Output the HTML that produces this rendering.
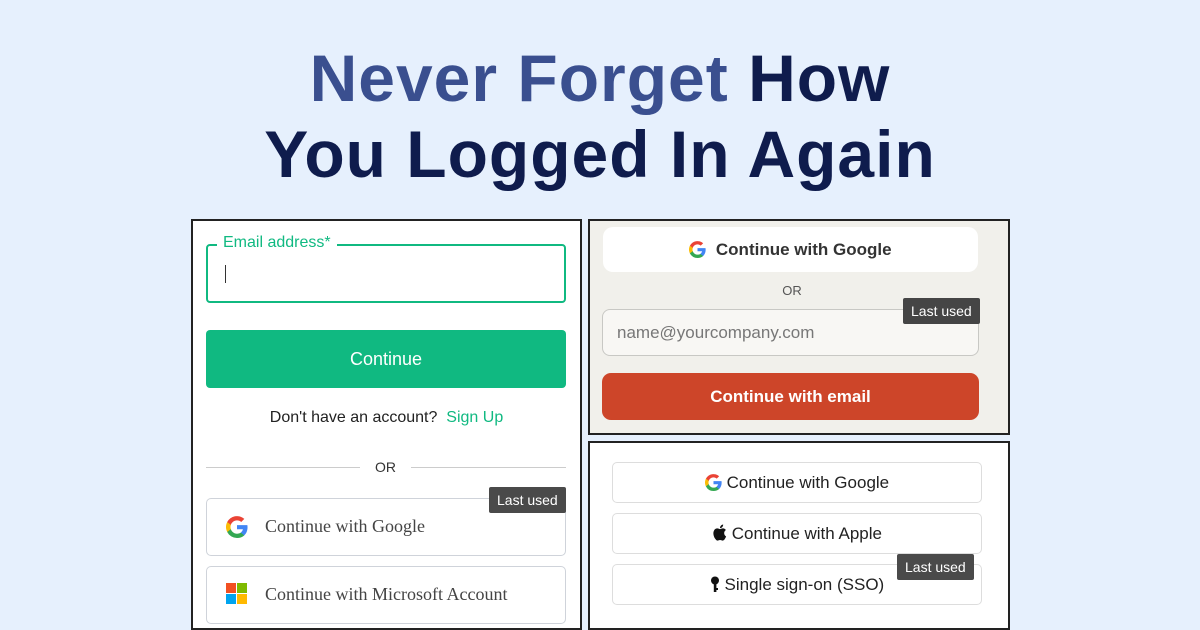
<!DOCTYPE html><html><head><style>
*{margin:0;padding:0;box-sizing:border-box}
body{width:1200px;height:630px;background:#e6f0fd;font-family:"Liberation Sans",sans-serif;position:relative;overflow:hidden}
.a{position:absolute}
h1{position:absolute;left:0;width:1200px;text-align:center;font-size:66px;font-weight:bold;color:#0f1c4d;line-height:72px;letter-spacing:1px}
.p{position:absolute;border:2px solid #222;background:#fff}
.tip{position:absolute;background:#4a4a4a;color:#fff;font-size:14px;padding:0 8px;line-height:26px;border-radius:2px}
.ob{position:absolute;border:1px solid #cfd3da;border-radius:5px;font-family:"Liberation Serif",serif;font-size:18px;color:#444}
.rb{position:absolute;left:22px;width:370px;height:41px;border:1px solid #ddd;border-radius:5px;text-align:center;line-height:39px;font-size:17px;color:#222}
svg{vertical-align:middle}
</style></head><body>
<svg width="0" height="0" style="position:absolute"><defs><g id="g"><path d="M23.5 12.3c0-.8-.1-1.6-.2-2.3H12v4.5h6.5a5.6 5.6 0 0 1-2.4 3.6v3h3.9c2.2-2.1 3.5-5.1 3.5-8.8z" fill="#4285F4"/><path d="M12 24c3.2 0 6-1.1 8-2.9l-3.9-3c-1.1.7-2.5 1.2-4.1 1.2-3.1 0-5.8-2.1-6.7-5H1.3v3.1A12 12 0 0 0 12 24z" fill="#34A853"/><path d="M5.3 14.3a7.2 7.2 0 0 1 0-4.6V6.6H1.3a12 12 0 0 0 0 10.8z" fill="#FBBC05"/><path d="M12 4.8c1.8 0 3.3.6 4.6 1.8l3.4-3.4A12 12 0 0 0 1.3 6.6l4 3.1c.9-2.8 3.6-4.9 6.7-4.9z" fill="#EA4335"/></g></defs></svg>
<h1 style="top:42px"><span style="color:#3a4f8f">Never Forget</span> How</h1>
<h1 style="top:118px">You Logged In Again</h1>

<div class="p" style="left:191px;top:219px;width:391px;height:411px">
 <div class="a" style="left:13px;top:23px;width:360px;height:59px;border:2px solid #10b981;border-radius:4px"></div>
 <div class="a" style="left:24px;top:13px;background:#fff;padding:0 6px;color:#10b981;font-size:16px">Email address*</div>
 <div class="a" style="left:32px;top:44px;width:1px;height:18px;background:#333"></div>
 <div class="a" style="left:13px;top:109px;width:360px;height:58px;background:#10b981;border-radius:4px;color:#fff;text-align:center;line-height:58px;font-size:18px">Continue</div>
 <div class="a" style="left:0;width:387px;top:188px;text-align:center;font-size:16px;color:#222">Don't have an account? &nbsp;<span style="color:#10b981">Sign Up</span></div>
 <div class="a" style="left:13px;top:246px;width:154px;height:1px;background:#ccc"></div>
 <div class="a" style="left:218px;top:246px;width:155px;height:1px;background:#ccc"></div>
 <div class="a" style="left:182px;top:238px;font-size:14px;color:#333">OR</div>
 <div class="ob" style="left:13px;top:277px;width:360px;height:58px"><svg class="a" style="left:19px;top:17px" width="22" height="22" viewBox="0 0 24 24"><use href="#g"/></svg><span class="a" style="left:58px;top:17px">Continue with Google</span></div>
 <div class="tip" style="left:296px;top:266px">Last used</div>
 <div class="ob" style="left:13px;top:345px;width:360px;height:58px">
  <div class="a" style="left:19px;top:16px;width:10px;height:10px;background:#f25022"></div><div class="a" style="left:30px;top:16px;width:10px;height:10px;background:#7fba00"></div><div class="a" style="left:19px;top:27px;width:10px;height:10px;background:#00a4ef"></div><div class="a" style="left:30px;top:27px;width:10px;height:10px;background:#ffb900"></div>
  <span class="a" style="left:58px;top:17px">Continue with Microsoft Account</span></div>
</div>

<div class="p" style="left:588px;top:219px;width:422px;height:216px;background:#f1f0eb">
 <div class="a" style="left:13px;top:6px;width:375px;height:45px;background:#fff;border-radius:10px;text-align:center;line-height:45px;font-size:17px;font-weight:bold;color:#333"><svg width="17" height="17" viewBox="0 0 24 24" style="margin-top:-3px"><use href="#g"/></svg>&nbsp; Continue with Google</div>
 <div class="a" style="left:0;width:404px;top:62px;text-align:center;font-size:13px;color:#555">OR</div>
 <div class="a" style="left:12px;top:88px;width:377px;height:47px;background:#f8f7f4;border:1px solid #c8c8c4;border-radius:8px;line-height:45px;padding-left:14px;font-size:17px;color:#777">name@yourcompany.com</div>
 <div class="tip" style="left:313px;top:77px;background:#454545">Last used</div>
 <div class="a" style="left:12px;top:152px;width:377px;height:47px;background:#cd4529;border-radius:9px;text-align:center;line-height:47px;font-size:17px;font-weight:bold;color:#fff">Continue with email</div>
</div>

<div class="p" style="left:588px;top:441px;width:422px;height:189px">
 <div class="rb" style="top:19px"><svg width="17" height="17" viewBox="0 0 24 24" style="margin-top:-3px"><use href="#g"/></svg> Continue with Google</div>
 <div class="rb" style="top:70px"><svg width="15" height="17" viewBox="0 0 17 20" style="margin-top:-4px"><path d="M14 10.6c0-2.4 2-3.5 2-3.6-1.1-1.6-2.8-1.8-3.4-1.8-1.4-.2-2.8.8-3.5.8s-1.9-.8-3.100-.8C4.400 5.200 2.900 6.100 2.100 7.600.4 10.500 1.700 14.900 3.300 17.200c.8 1.100 1.700 2.400 2.900 2.300 1.200 0 1.600-.7 3-.7s1.800.7 3 .7c1.300 0 2.100-1.100 2.800-2.300.9-1.300 1.300-2.600 1.300-2.600s-2.300-.9-2.300-4zM11.800 3.600c.6-.8 1.100-1.900 1-3-.9 0-2.100.6-2.700 1.400-.6.700-1.100 1.800-1 2.900 1 .1 2.100-.5 2.700-1.300z" fill="#111"/></svg> Continue with Apple</div>
 <div class="rb" style="top:121px"><svg width="10" height="17" viewBox="0 0 10 17" style="margin-top:-3px"><circle cx="5" cy="4.5" r="4" fill="#111"/><rect x="3.8" y="7" width="2.6" height="9" fill="#111"/><rect x="5" y="12" width="3" height="2" fill="#111"/></svg> Single sign-on (SSO)</div>
 <div class="tip" style="left:307px;top:111px">Last used</div>
</div>
</body></html>
